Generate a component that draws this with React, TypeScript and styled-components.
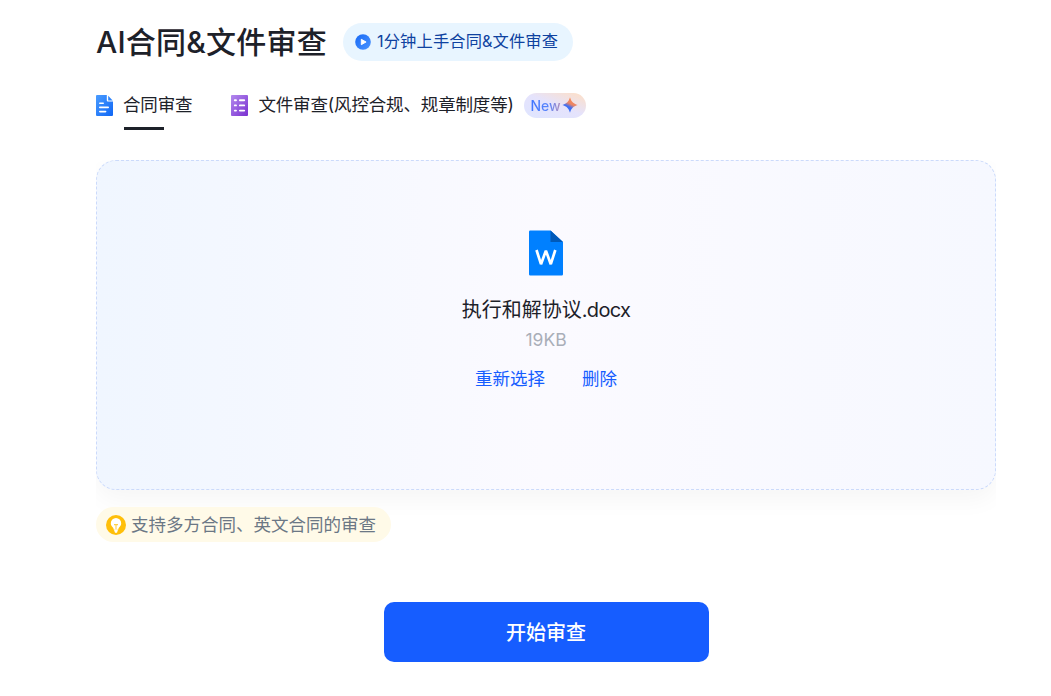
import React from 'react';
import styled, { createGlobalStyle } from 'styled-components';

const GlobalStyle = createGlobalStyle`
  * { box-sizing: border-box; }
  body {
    margin: 0;
    background: #fff;
    color: #1d2129;
    font-family: Inter, "Noto Sans CJK SC", sans-serif;
  }
  button { font-family: inherit; border: 0; padding: 0; background: none; cursor: pointer; }
`;

const Page = styled.main`
  width: 900px;
  margin-left: 96px;
  padding-top: 23px;
  display: flex;
  flex-direction: column;
`;

const Header = styled.header`
  display: flex;
  align-items: center;
  height: 38px;
`;

const Title = styled.h1`
  margin: 0;
  width: 247px;
  font-size: 30px;
  line-height: 38px;
  font-weight: 500;
  letter-spacing: 0.2px;
  white-space: nowrap;
`;

const Guide = styled.button`
  display: flex;
  align-items: center;
  width: 230px;
  height: 38px;
  padding-left: 12px;
  gap: 6px;
  border-radius: 19px;
  background: #e8f5ff;
  color: #0e42a0;
  font-size: 16.25px;
  letter-spacing: 0.13px;
  line-height: 36px;
  white-space: nowrap;
`;

const GuideText = styled.span`
  height: 38px;
`;

const Tabs = styled.nav`
  display: flex;
  height: 38px;
  margin-top: 31px;
`;

const Tab = styled.div`
  position: relative;
  display: flex;
  align-items: center;
  height: 26px;
  margin-right: 39px;
  font-size: 17.5px;
  letter-spacing: -0.15px;
  white-space: nowrap;
  & > svg { flex: none; margin-right: 10px; }
`;

const Underline = styled.i`
  position: absolute;
  left: 28px;
  top: 35px;
  width: 40px;
  height: 3px;
  background: #1d2129;
`;

const TabText = styled.span<{ $width?: number }>`
  width: ${p => (p.$width ? `${p.$width}px` : 'auto')};
  line-height: 26px;
`;

const NewBadge = styled.span`
  display: flex;
  align-items: center;
  width: 62px;
  height: 25px;
  padding-left: 6px;
  gap: 1px;
  border-radius: 13px;
  background: linear-gradient(200deg, #ffdfc4 0%, #e5e3fc 48%, #dfe5ff 100%);
`;

const NewText = styled.span`
  width: 31px;
  font-size: 14px;
  font-weight: 500;
  letter-spacing: 0;
  line-height: 25px;
  background: linear-gradient(90deg, #3d74ff, #5b86fb 60%, #b58fb8);
  background-clip: text;
  color: transparent;
`;

const DropFrame = styled.section`
  margin-top: 30px;
  clip-path: inset(0 0 -40px 0);
`;

const DropZone = styled.div`
  display: flex;
  flex-direction: column;
  align-items: center;
  height: 330px;
  padding-top: 69px;
  border: 1px dashed #cbdafb;
  border-radius: 20px;
  background: linear-gradient(90deg, #f0f6ff 0%, #fbfaff 50%, #f6f8ff 100%);
  box-shadow: 0 10px 25px rgba(0, 0, 0, 0.04);
`;

const FileName = styled.div`
  margin-top: 19px;
  font-size: 20px;
  line-height: 30px;
`;

const Extension = styled.span`
  letter-spacing: -0.7px;
`;

const FileSize = styled.div`
  font-size: 17.5px;
  line-height: 30px;
  color: #a9aeb8;
`;

const Actions = styled.div`
  display: flex;
  gap: 37px;
  margin-top: 11px;
`;

const Link = styled.button`
  color: #165dff;
  font-size: 17.5px;
  line-height: 26px;
`;

const Hint = styled.div`
  display: flex;
  align-items: center;
  width: 295px;
  height: 35px;
  margin-top: 17px;
  padding-left: 10px;
  gap: 5px;
  border-radius: 18px;
  background: #fffae8;
  color: #6b7785;
  font-size: 17.5px;
  line-height: 35px;
  white-space: nowrap;
  z-index: 1;
`;

const Start = styled.button`
  align-self: center;
  width: 325px;
  height: 60px;
  margin-top: 60px;
  padding-top: 3px;
  border-radius: 10px;
  background: #165dff;
  color: #fff;
  font-size: 20px;
  font-weight: 500;
  line-height: 57px;
`;

const PlayIcon = () => (
  <svg width="16" height="16" viewBox="0 0 16 16">
    <defs>
      <linearGradient id="play" x1="0" y1="0" x2="1" y2="1">
        <stop offset="0" stopColor="#1769f5" />
        <stop offset="1" stopColor="#4b94ff" />
      </linearGradient>
    </defs>
    <circle cx="8" cy="8" r="7.8" fill="url(#play)" />
    <path d="M6.3 5.3v5.4l4.8-2.7z" fill="#fff" stroke="#fff" strokeWidth=".9" strokeLinejoin="round" />
  </svg>
);

const ContractIcon = () => (
  <svg width="17" height="21" viewBox="0 0 17 21">
    <defs>
      <linearGradient id="doc" x1="0" y1="0" x2="1" y2="1">
        <stop offset="0" stopColor="#4a9cff" />
        <stop offset="1" stopColor="#0f66f5" />
      </linearGradient>
    </defs>
    <path d="M1 0h9.8v5.5a1 1 0 0 0 1 1H17V20a1 1 0 0 1-1 1H1a1 1 0 0 1-1-1V1a1 1 0 0 1 1-1z" fill="url(#doc)" />
    <path d="M12.2.7 16.7 5.4H12.2z" fill="#2f85fc" />
    <path d="M3.8 8.2h3.4M3.8 12.4h8.4M3.8 16.6h5.8" stroke="#fff" strokeWidth="1.6" strokeLinecap="round" />
  </svg>
);

const ListIcon = () => (
  <svg width="17" height="21" viewBox="0 0 17 21">
    <defs>
      <linearGradient id="list" x1="0" y1="0" x2="1" y2="1">
        <stop offset="0" stopColor="#b38aee" />
        <stop offset="1" stopColor="#7a30d0" />
      </linearGradient>
    </defs>
    <rect width="17" height="21" rx="1" fill="url(#list)" />
    <path d="M3.8 5.2H5M3.8 10.4H5M3.8 15.6H5M8.9 5.2h4.3M8.9 10.4h4.3M8.9 15.6h4.3" stroke="#fff" strokeWidth="1.9" strokeLinecap="round" />
  </svg>
);

const SparkIcon = () => (
  <svg width="16" height="16" viewBox="0 0 16 16">
    <defs>
      <linearGradient id="spark" x1=".7" y1=".1" x2=".3" y2=".9">
        <stop offset="0" stopColor="#ff8a4c" />
        <stop offset=".42" stopColor="#e88468" />
        <stop offset=".66" stopColor="#3d6ff5" />
        <stop offset="1" stopColor="#3d6ff5" />
      </linearGradient>
    </defs>
    <path d="M8 .3C9.3 4.7 11.3 6.7 15.7 8 11.3 9.3 9.3 11.3 8 15.7 6.700 11.300 4.700 9.300.3 8 4.700 6.700 6.700 4.700 8 .3z" fill="url(#spark)" />
  </svg>
);

const WordIcon = () => (
  <svg width="34" height="46" viewBox="0 0 34 46">
    <path d="M1.2.5H21.5L34 12v32.3a1.2 1.2 0 0 1-1.2 1.2H1.2A1.2 1.2 0 0 1 0 44.3V1.7A1.2 1.2 0 0 1 1.2.5z" fill="#0080ff" />
    <path d="M21.5.5 34 12H21.5z" fill="#0059b8" />
    <path d="M7.5 20 12 34.2 16.9 20.6 21.8 34.2 26.3 20" fill="none" stroke="#fff" strokeWidth="2.7" strokeLinejoin="bevel" />
  </svg>
);

const BulbIcon = () => (
  <svg width="20" height="20" viewBox="0 0 20 20">
    <circle cx="10" cy="10" r="10" fill="#ffbf0a" />
    <path d="M10 3a5.2 5.2 0 0 0-5.2 5.2c0 2 1.1 3.3 2.3 4.5.5.5.5 1.3.5 1.9h4.8c0-.6 0-1.4.5-1.9 1.2-1.2 2.3-2.5 2.3-4.5A5.2 5.2 0 0 0 10 3z" fill="#fff" />
    <path d="M7.9 14.600h4.200L11 17.800H9z" fill="#fff" />
    <path d="M8 9.600h4M10 9.600v4.500" stroke="#ffcf45" strokeWidth="1.100" />
  </svg>
);

export default function App() {
  return (
    <>
      <GlobalStyle />
      <Page>
        <Header>
          <Title>AI合同&amp;文件审查</Title>
          <Guide><PlayIcon /><GuideText>1分钟上手合同&amp;文件审查</GuideText></Guide>
        </Header>
        <Tabs>
          <Tab>
            <ContractIcon />
            <TabText>合同审查</TabText>
            <Underline />
          </Tab>
          <Tab>
            <ListIcon />
            <TabText $width={266}>文件审查(风控合规、规章制度等)</TabText>
            <NewBadge><NewText>New</NewText><SparkIcon /></NewBadge>
          </Tab>
        </Tabs>
        <DropFrame>
          <DropZone>
            <WordIcon />
            <FileName>执行和解协议<Extension>.docx</Extension></FileName>
            <FileSize>19KB</FileSize>
            <Actions>
              <Link>重新选择</Link>
              <Link>删除</Link>
            </Actions>
          </DropZone>
        </DropFrame>
        <Hint><BulbIcon />支持多方合同、英文合同的审查</Hint>
        <Start>开始审查</Start>
      </Page>
    </>
  );
}
